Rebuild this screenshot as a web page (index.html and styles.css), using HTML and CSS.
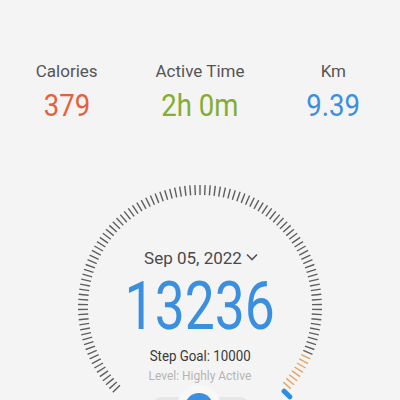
FILE: index.html
```
<!DOCTYPE html>
<html>
<head>
  <meta charset="utf-8">
  <title>Steps</title>
  <link rel="stylesheet" href="styles.css">
</head>
<body>
  <main class="screen">
    <section class="stats">
      <div class="stat">
        <div class="stat-label">Calories</div>
        <div class="stat-value cal"><span>379</span></div>
      </div>
      <div class="stat">
        <div class="stat-label">Active Time</div>
        <div class="stat-value time"><span>2h 0m</span></div>
      </div>
      <div class="stat">
        <div class="stat-label">Km</div>
        <div class="stat-value km"><span>9.39</span></div>
      </div>
    </section>

    <section class="dial">
      <svg class="ticks" id="ticks" width="260" height="260" viewBox="-130 -130 260 260"></svg>
      <div class="dial-body">
        <div class="date">Sep 05, 2022
          <svg class="chevron" width="12" height="8" viewBox="0 0 12 8"><path d="M1 1.5 L6 6.5 L11 1.5" fill="none" stroke="#555" stroke-width="1.6"/></svg>
        </div>
        <div class="steps"><span>13236</span></div>
        <div class="goal"><span>Step Goal: 10000</span></div>
        <div class="level"><span>Level: Highly Active</span></div>
        <div class="toggle">
          <div class="toggle-knob"></div>
        </div>
      </div>
    </section>
  </main>
  <script src="script.js"></script>
</body>
</html>
```

FILE: styles.css
```
html, body { margin:0; background:#f4f4f4; }

body {
  font-family: Roboto, "Noto Sans", sans-serif;
  color:#555;
  width:400px; height:400px; overflow:hidden;
}

.stats {
  display:grid;
  grid-template-columns: 1fr 1fr 1fr;
  padding-top:61px;
  text-align:center;
}

.stat-label { font-size:17px; line-height:20px; color:#555; }

.stat-value { font-size:32px; line-height:38px; margin-top:5px; }
.stat-value span { display:inline-block; transform:scaleX(0.86); }
.cal  { color:#e6613b; }
.time { color:#85ad33; }
.km   { color:#3b8fdf; }

.dial {
  position:relative;
  margin-top:53px;
  height:260px;
}

.ticks { position:absolute; left:70px; top:0; }

.dial-body {
  position:relative;
  display:flex; flex-direction:column; align-items:center;
  padding-top:71px;
}

.date {
  font-size:17px; line-height:20px; color:#4a4a4a;
  display:flex; align-items:center; gap:4px;
  margin-left:2px;
}
.chevron { margin-top:-3px; }

.steps { font-size:66px; line-height:72px; color:#3a8fde; margin-top:3px; }
.steps span { display:inline-block; transform:scaleX(0.81); }

.goal { font-size:14px; line-height:18px; color:#3a3a3a; margin-top:4px; }
.goal span { display:inline-block; transform:scaleX(0.95); }

.level { font-size:13px; line-height:17px; color:#b4b4b4; margin-top:2px; }
.level span { display:inline-block; transform:scaleX(0.92); }

.toggle {
  margin-top:9px;
  width:98px; height:20px;
  margin-left:2px;
  border-radius:10px;
  background:#e6e6e6;
  display:flex; justify-content:center;
  position:relative; top:4px;
}
.toggle-knob {
  width:28px; height:28px;
  margin-top:-4px;
  margin-left:-4px;
  border-radius:50%;
  background:#3a8fde;
  box-shadow:0 0 0 8px #f8f8f8;
}
```

FILE: script.js
```
// build gauge ticks: 2.4deg apart, 270deg sweep
var svg = document.getElementById('ticks');
var ns = 'http://www.w3.org/2000/svg';

function tick(deg, r1, r2, color, width, cap) {
  var a = (deg - 90) * Math.PI / 180;
  var l = document.createElementNS(ns, 'line');
  l.setAttribute('x1', (Math.cos(a) * r1).toFixed(2));
  l.setAttribute('y1', (Math.sin(a) * r1).toFixed(2));
  l.setAttribute('x2', (Math.cos(a) * r2).toFixed(2));
  l.setAttribute('y2', (Math.sin(a) * r2).toFixed(2));
  l.setAttribute('stroke', color);
  l.setAttribute('stroke-width', width);
  if (cap) l.setAttribute('stroke-linecap', cap);
  svg.appendChild(l);
}

for (var i = -56; i <= 55; i++) {
  var color = (i >= 48) ? '#e8a45c' : '#5e5e5e';
  tick(i * 2.4, 112, 122, color, 1.4);
}
tick(135, 119, 127, '#2f8de0', 5, 'round');
```
